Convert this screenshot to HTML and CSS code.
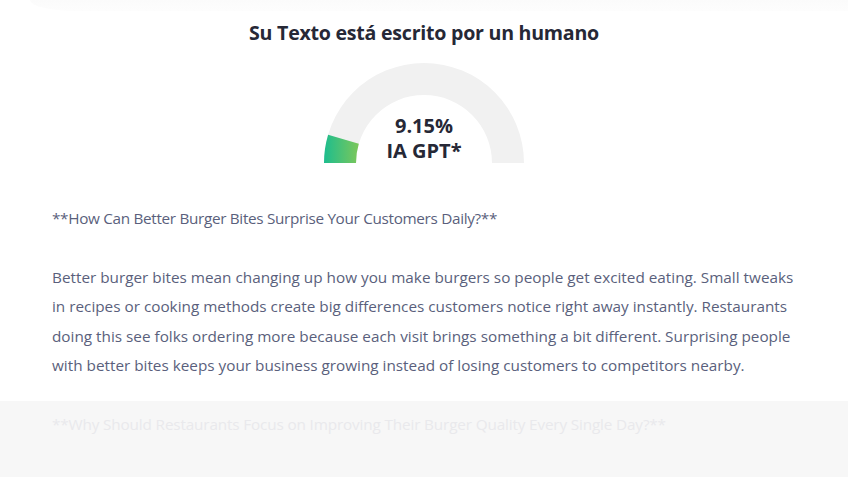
FILE: index.html
```html
<!DOCTYPE html>
<html lang="es">
<head>
<meta charset="utf-8">
<link rel="stylesheet" href="styles.css">
</head>
<body>
<div class="topshade"></div>
<main class="result">
  <h1 class="title">Su Texto está escrito por un humano</h1>
  <div class="gauge">
    <svg class="gauge-svg" width="200" height="100" viewBox="0 0 200 100">
      <defs>
        <linearGradient id="g" x1="0" y1="0" x2="1" y2="0">
          <stop offset="0" stop-color="#1dbd8e"/>
          <stop offset="1" stop-color="#7cc75a"/>
        </linearGradient>
      </defs>
      <path d="M0,100 A100,100 0 0 1 200,100 L168,100 A68,68 0 0 0 32,100 Z" fill="#f1f1f1"/>
      <path d="M0,100 A100,100 0 0 1 4.10,71.65 L34.8,80.72 A68,68 0 0 0 32,100 Z" fill="url(#g)"/>
    </svg>
    <div class="gauge-label">
      <span>9.15%</span>
      <span>IA GPT*</span>
    </div>
  </div>
  <div class="text">
    <p class="subhead">**How Can Better Burger Bites Surprise Your Customers Daily?**</p>
    <p>Better burger bites mean changing up how you make burgers so people get excited eating. Small tweaks in recipes or cooking methods create big differences customers notice right away instantly. Restaurants doing this see folks ordering more because each visit brings something a bit different. Surprising people with better bites keeps your business growing instead of losing customers to competitors nearby.</p>
  </div>
  <div class="text faded">
    <p class="subhead">**Why Should Restaurants Focus on Improving Their Burger Quality Every Single Day?**</p>
  </div>
</main>
</body>
</html>
```

FILE: styles.css
```css
html, body {
  margin: 0;
  padding: 0;
  background: #ffffff;
  overflow: hidden;
}
body {
  font-family: "Open Sans", "Noto Sans", sans-serif;
  width: 848px;
  height: 477px;
  display: flex;
  flex-direction: column;
}
.topshade {
  flex: none;
  height: 11px;
  margin: 0 0 0 30px;
  background: linear-gradient(#fbfbfb, #fdfdfd);
  border-radius: 0 0 0 60px / 0 0 0 14px;
}
.result {
  flex: 1;
  display: flex;
  flex-direction: column;
}
.title {
  margin: 9px 0 0;
  text-align: center;
  font-size: 19.6px;
  letter-spacing: -0.25px;
  line-height: 26px;
  font-weight: 700;
  color: #262836;
}
.gauge {
  position: relative;
  width: 200px;
  height: 100px;
  margin: 17px auto 0;
}
.gauge-svg {
  display: block;
}
.gauge-label {
  position: absolute;
  left: 0;
  right: 0;
  top: 50px;
  display: flex;
  flex-direction: column;
  align-items: center;
  font-size: 20px;
  line-height: 25px;
  font-weight: 700;
  color: #262836;
}
.text {
  padding: 41px 40px 0 52px;
  font-size: 15.3px;
  line-height: 29.5px;
  color: #5a5f7c;
}
.text p {
  margin: 0 0 29px;
}
.text .subhead {
  letter-spacing: -0.32px;
}
.faded {
  flex: 1;
  padding-top: 9px;
  margin-top: -9px;
  background: #f7f7f7;
  color: #e9e9ec;
}
.faded .subhead {
  letter-spacing: -0.15px;
}
```
